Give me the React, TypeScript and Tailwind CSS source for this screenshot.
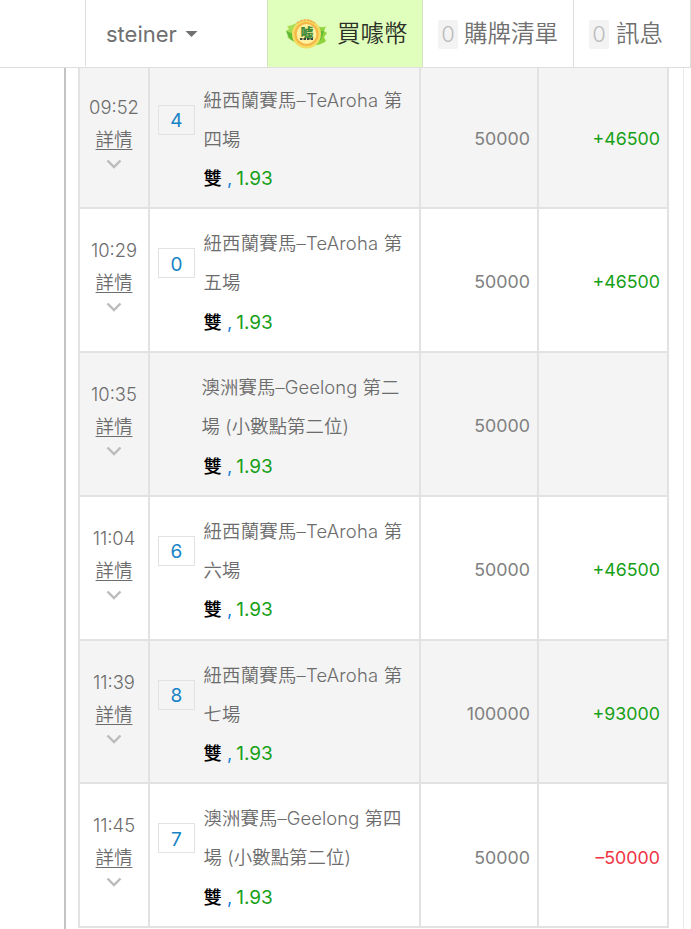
import clsx from "clsx";

type Bet = {
    time: string;
    digit?: string;
    lines: [string, string];
    amount: string;
    result?: string;
};

const bets: Bet[] = [
    { time: "09:52", digit: "4", lines: ["紐西蘭賽馬–TeAroha 第", "四場"], amount: "50000", result: "+46500" },
    { time: "10:29", digit: "0", lines: ["紐西蘭賽馬–TeAroha 第", "五場"], amount: "50000", result: "+46500" },
    { time: "10:35", lines: ["澳洲賽馬–Geelong 第二", "場 (小數點第二位)"], amount: "50000" },
    { time: "11:04", digit: "6", lines: ["紐西蘭賽馬–TeAroha 第", "六場"], amount: "50000", result: "+46500" },
    { time: "11:39", digit: "8", lines: ["紐西蘭賽馬–TeAroha 第", "七場"], amount: "100000", result: "+93000" },
    { time: "11:45", digit: "7", lines: ["澳洲賽馬–Geelong 第四", "場 (小數點第二位)"], amount: "50000", result: "–50000" },
];

const CoinIcon = () => (
    <svg width="42" height="34" viewBox="0 0 42 34" className="shrink-0">
        <path d="M1 9 Q6 9 12 5 L14 27 Q6 25 1 20 L4 18 L0 14 L3 12 Z" fill="#a5dd55" />
        <path d="M29 8 Q36 12 40 9 L38 14 L41 16 L38 20 L40 24 Q35 29 24 28 Z" fill="#8fd33f" />
        <path d="M0 14 L8 17 L10 25 Q4 23 2 19 Z M33 14 L38 14 L35 23 L30 26 Z" fill="#62bb36" />
        <circle cx="20.5" cy="17" r="14.5" fill="#f3dc62" />
        <circle cx="20.5" cy="17" r="11" fill="#fff0a0" stroke="#f6b648" strokeWidth="2.2" />
        <path d="M11 6 Q20 0 29 6" fill="none" stroke="#f5a74b" strokeWidth="1.5" strokeDasharray="2.5 1" />
        <text x="21" y="20" textAnchor="middle" fontSize="13" fontWeight="900" fill="#3f8b38" fontFamily="Noto Sans CJK TC, sans-serif">噱</text>
        <path d="M14 22 H27" stroke="#35463a" strokeWidth="2" strokeDasharray="2.5 1" />
    </svg>
);

const Count = () => (
    <span className="flex h-[29px] w-5 shrink-0 items-center justify-center rounded-xs bg-[#f3f3f3] text-[22px] text-[#bbb]">0</span>
);

const Header = () => (
    <header className="relative z-10 flex h-[68px] border-b border-[#dedede] bg-white pb-px text-[23.5px] text-[#707070]">
        <div className="w-[85px] shrink-0" />
        <div className="flex w-[182px] shrink-0 items-center gap-[8px] border-l border-[#ddd] pl-5 pt-0.5">
            <span className="text-[22px] font-normal">steiner</span>
            <svg width="13" height="6" viewBox="0 0 12 6"><path d="M0 0H12L6 6Z" fill="#707070" /></svg>
        </div>
        <div className="-mb-px flex w-[156px] shrink-0 items-center border-x border-[#d5e3c5] bg-[#e0ffbc] pl-[18px] text-[#2b2f28]">
            <CoinIcon />
            <span className="ml-[9px] whitespace-nowrap pt-px">買噱幣</span>
        </div>
        <div className="-mb-px flex w-[150px] shrink-0 items-center gap-[6px] pl-[15px] pt-px">
            <Count />
            <span className="whitespace-nowrap">購牌清單</span>
        </div>
        <div className="-mb-px flex w-[118px] shrink-0 items-center gap-[7px] border-l border-r border-[#ddd] pl-[15px] pt-px">
            <Count />
            <span className="whitespace-nowrap">訊息</span>
        </div>
    </header>
);

const BetRow = ({ bet, striped }: { bet: Bet; striped: boolean }) => (
    <div className={clsx("grid h-[143.8px] grid-cols-[70px_271px_118px_130px] border-b-2 border-[#e2e2e2]", striped ? "bg-[#f4f4f4]" : "bg-white")}>
        <div className="flex flex-col items-center border-r-2 border-[#e2e2e2] pt-[25px]">
            <span className="h-8 leading-8">{bet.time}</span>
            <a className="h-8 leading-8 underline decoration-1 underline-offset-[3px]">詳情</a>
            <svg width="16" height="10" viewBox="0 0 16 10" className="mt-1">
                <path d="M1.5 1.5 L8 8 L14.5 1.5" fill="none" stroke="#bbb" strokeWidth="2.4" />
            </svg>
        </div>
        <div className="flex border-r-2 border-[#e2e2e2] pl-2 pt-[15px]">
            <div className="w-[45.5px] shrink-0 pt-6">
                {bet.digit && (
                    <span className="flex h-[30px] w-[37px] items-center justify-center border border-[#e2e2e2] pt-[3px] text-[19px] font-normal text-[#1683c6]">{bet.digit}</span>
                )}
            </div>
            <div className="whitespace-nowrap leading-[39px]">
                <div className={clsx(bet.lines[0].includes("TeAroha") ? "tracking-[0.22px]" : "tracking-[0.08px]", !bet.digit && "-ml-0.5")}>
                    <div>{bet.lines[0]}</div>
                    <div>{bet.lines[1]}</div>
                </div>
                <div className="flex pt-[0.6px]">
                    <span className="font-medium text-black">雙</span>
                    <span className="ml-[5px] font-normal text-[#1683d8]">,</span>
                    <span className="ml-1 text-[19px] font-normal text-[#16a016]">1.93</span>
                </div>
            </div>
        </div>
        <div className="flex items-center justify-end border-r-2 border-[#e2e2e2] pr-[7px] pt-[5px] text-[17.8px] font-normal text-[#808080]">{bet.amount}</div>
        <div className={clsx("flex items-center justify-end border-r-2 border-[#e2e2e2] pr-[7px] pt-[5px] text-[17.8px] font-normal", bet.result?.startsWith("+") ? "text-[#16a016]" : "text-[#f03344]")}>
            {bet.result}
        </div>
    </div>
);

const App: React.FC = () => {
    return (
        <div className="h-[929px] w-[691px] overflow-hidden bg-white font-['Inter','Noto_Sans_CJK_TC',sans-serif] text-[18.4px] font-[350] text-[#6c6c6c]">
            <Header />

            <main className="-mt-[2.5px] ml-16 mr-[7px] h-[864px] border-l-2 border-r border-l-[#c4c4c4] border-r-[#eaeaea] pl-3">
                <div className="w-[591px] border-l-2 border-[#e2e2e2]">
                    {bets.map((bet, i) => (
                        <BetRow key={bet.time} bet={bet} striped={i % 2 === 0} />
                    ))}
                </div>
            </main>
        </div>
    );
};

export default App;
